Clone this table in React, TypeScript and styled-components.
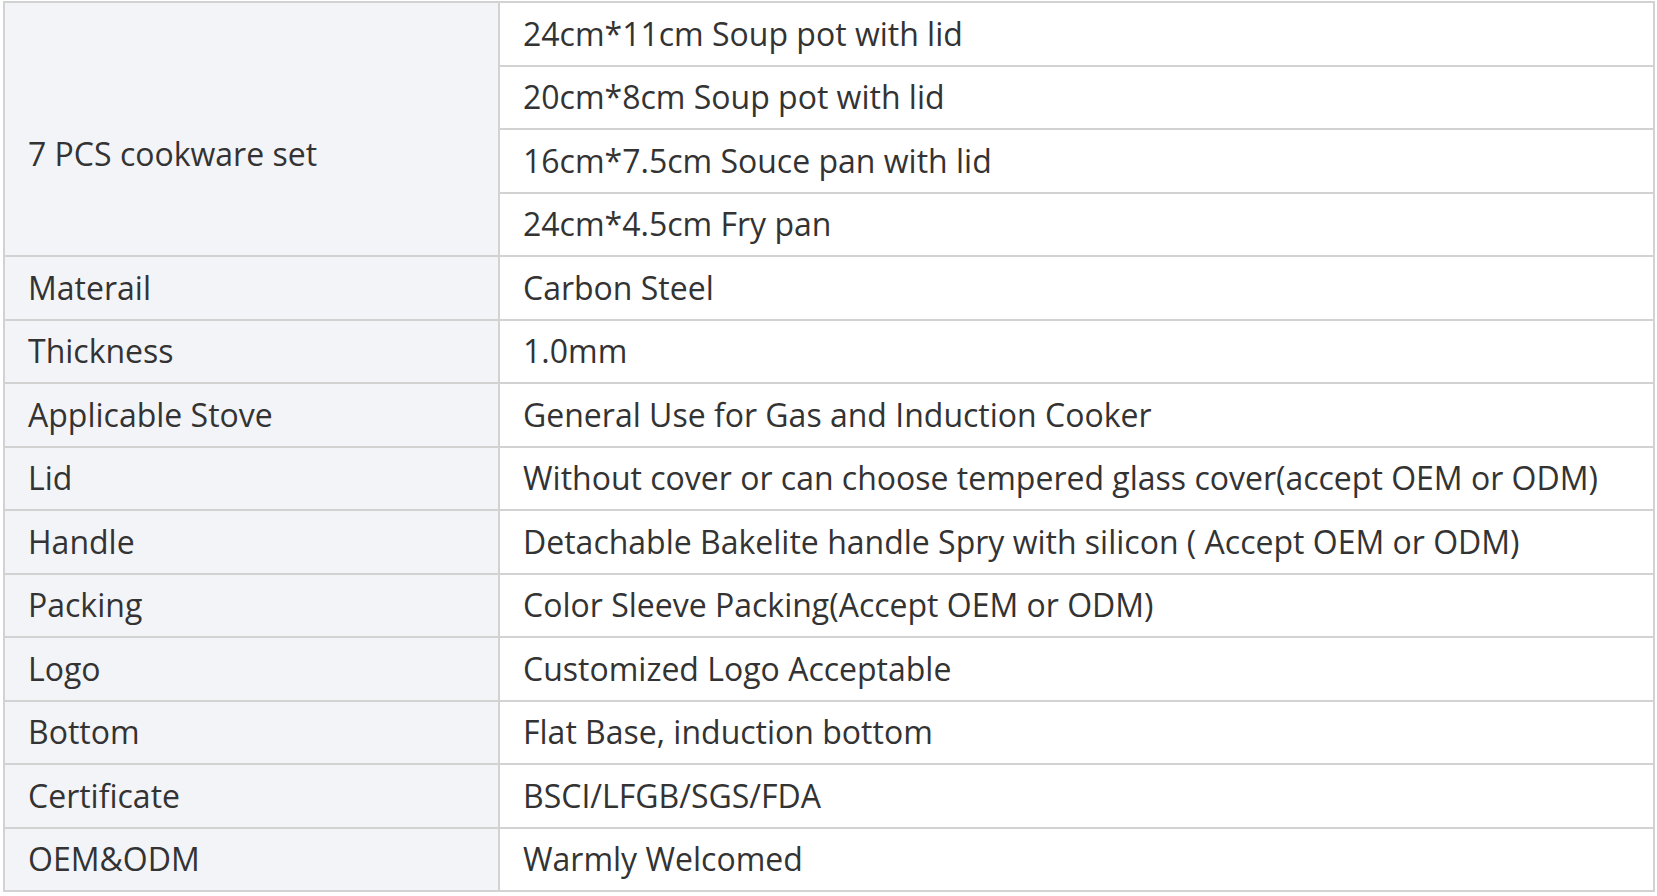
import React from "react";
import styled, { createGlobalStyle } from "styled-components";

const GlobalStyle = createGlobalStyle`
  html, body {
    margin: 0;
    padding: 0;
    background: #ffffff;
  }
  body {
    font-family: "Open Sans", "Noto Sans", "Liberation Sans", sans-serif;
  }
`;

const Page = styled.div`
  padding: 1px 0 0 3px;
`;

const SpecTable = styled.table`
  width: 1652px;
  table-layout: fixed;
  border-collapse: collapse;
  border: 2px solid #d2d2d2;
  font-size: 32px;
  color: #333333;
`;

const LabelCol = styled.col`
  width: 495px;
`;

const Cell = styled.td<{ $label?: boolean; $lowered?: boolean }>`
  border: 2px solid #d2d2d2;
  padding: ${(p) => (p.$lowered ? "56.75px 23px 6.75px" : "6.75px 23px")};
  line-height: 48px;
  text-align: left;
  vertical-align: middle;
  white-space: nowrap;
  background: ${(p) => (p.$label ? "#f3f4f8" : "#ffffff")};
`;

const setItems = [
  "24cm*11cm Soup pot with lid",
  "20cm*8cm Soup pot with lid",
  "16cm*7.5cm Souce pan with lid",
  "24cm*4.5cm Fry pan",
];

const specs: [string, string][] = [
  ["Materail", "Carbon Steel"],
  ["Thickness", "1.0mm"],
  ["Applicable Stove", "General Use for Gas and Induction Cooker"],
  ["Lid", "Without cover or can choose tempered glass cover(accept OEM or ODM)"],
  ["Handle", "Detachable Bakelite handle Spry with silicon ( Accept OEM or ODM)"],
  ["Packing", "Color Sleeve Packing(Accept OEM or ODM)"],
  ["Logo", "Customized Logo Acceptable"],
  ["Bottom", "Flat Base, induction bottom"],
  ["Certificate", "BSCI/LFGB/SGS/FDA"],
  ["OEM&ODM", "Warmly Welcomed"],
];

export default function App() {
  return (
    <>
      <GlobalStyle />
      <Page>
        <SpecTable>
          <colgroup>
            <LabelCol />
            <col />
          </colgroup>
          <tbody>
            {setItems.map((item, i) => (
              <tr key={item}>
                {i === 0 && (
                  <Cell $label $lowered rowSpan={setItems.length}>
                    7 PCS cookware set
                  </Cell>
                )}
                <Cell>{item}</Cell>
              </tr>
            ))}
            {specs.map(([label, value]) => (
              <tr key={label}>
                <Cell $label>{label}</Cell>
                <Cell>{value}</Cell>
              </tr>
            ))}
          </tbody>
        </SpecTable>
      </Page>
    </>
  );
}
